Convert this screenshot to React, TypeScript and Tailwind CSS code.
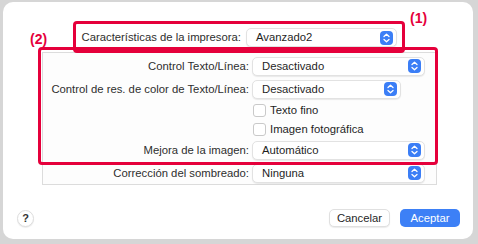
import React from 'react'

const font = { fontFamily: '"Liberation Sans", Arial, sans-serif' }

function Stepper() {
  return (
    <span className="flex h-[14px] w-[13px] items-center justify-center rounded-[4px] bg-[#3b7ef6]">
      <svg width="7" height="10" viewBox="0 0 7 10" fill="none">
        <path d="M1 3.6 L3.5 1.3 L6 3.6" stroke="white" strokeWidth="1.3" strokeLinecap="round" strokeLinejoin="round" />
        <path d="M1 6.4 L3.5 8.7 L6 6.4" stroke="white" strokeWidth="1.3" strokeLinecap="round" strokeLinejoin="round" />
      </svg>
    </span>
  )
}

function Popup({ value, width }: { value: string; width: string }) {
  return (
    <div
      className={`flex h-[19px] ${width} items-center justify-between rounded-[5px] border border-[#e2e2e2] bg-white pl-[9px] pr-[3px] text-[11.3px] text-[#1f1f1f] shadow-[0_1px_1px_rgba(0,0,0,0.08)]`}
    >
      <span>{value}</span>
      <Stepper />
    </div>
  )
}

function Check({ label }: { label: string }) {
  return (
    <div className="flex h-[16px] items-center pl-[210px]">
      <span className="h-[13px] w-[13px] rounded-[3px] border border-[#c9c9c9] bg-white" />
      <span className="ml-[4px] text-[11.3px] text-[#1f1f1f]">{label}</span>
    </div>
  )
}

function Row({ label, children }: { label: string; children: React.ReactNode }) {
  return (
    <div className="flex h-[20px] items-center">
      <span className="w-[208px] shrink-0 pr-[2px] text-right text-[11.3px] text-[#2e2e2e]">{label}</span>
      <span className="ml-[1px]">{children}</span>
    </div>
  )
}

export default function App() {
  return (
    <div className="relative h-[244px] w-[478px] overflow-hidden bg-[#d6d6d6] pl-[3px] pt-[2px]" style={font}>
      {/* dialog window */}
      <div className="flex h-[237px] w-[470px] flex-col rounded-[10px] bg-white">
        <div className="mt-[26px] flex h-[19px] items-center">
          <span className="w-[240px] pr-[2px] text-right text-[11.3px] text-[#2e2e2e]">Características de la impresora:</span>
          <span className="ml-[3px]">
            <Popup value="Avanzado2" width="w-[151px]" />
          </span>
        </div>

        {/* group box */}
        <div className="ml-[39px] mt-[5px] flex h-[133px] w-[395px] flex-col gap-[3px] border border-[#dcdcdc] bg-[#fdfdfd] pt-[3px]">
          <Row label="Control Texto/Línea:">
            <Popup value="Desactivado" width="w-[173px]" />
          </Row>
          <Row label="Control de res. de color de Texto/Línea:">
            <Popup value="Desactivado" width="w-[149px]" />
          </Row>
          <Check label="Texto fino" />
          <Check label="Imagen fotográfica" />
          <Row label="Mejora de la imagen:">
            <Popup value="Automático" width="w-[173px]" />
          </Row>
          <Row label="Corrección del sombreado:">
            <Popup value="Ninguna" width="w-[173px]" />
          </Row>
        </div>

        {/* footer */}
        <div className="mt-[24px] flex items-center pl-[14px] pr-[13px]">
          <span className="flex h-[17px] w-[17px] items-center justify-center rounded-full border border-[#dedede] bg-white text-[11px] font-bold text-[#333] shadow-[0_1px_1px_rgba(0,0,0,0.08)]">
            ?
          </span>
          <div className="ml-auto flex gap-[10px]">
            <button className="h-[18px] w-[61px] rounded-[5px] border border-[#e0e0e0] bg-white text-[11.3px] text-[#1f1f1f] shadow-[0_1px_1px_rgba(0,0,0,0.08)]">
              Cancelar
            </button>
            <button className="h-[18px] w-[60px] rounded-[5px] bg-[#3d80f6] text-[11.3px] text-white">
              Aceptar
            </button>
          </div>
        </div>
      </div>

      {/* annotations */}
      <div className="absolute left-[38px] top-[47px] h-[118px] w-[400px] rounded-[4px] border-[3px] border-[#e5003b]" />
      <div className="absolute left-[73px] top-[21px] h-[32px] w-[332px] rounded-[4px] border-[3px] border-[#e5003b]" />
      <span className="absolute left-[30px] top-[29px] text-[14px] font-bold text-[#e5003b]">(2)</span>
      <span className="absolute left-[410px] top-[8px] text-[14px] font-bold text-[#e5003b]">(1)</span>
    </div>
  )
}
